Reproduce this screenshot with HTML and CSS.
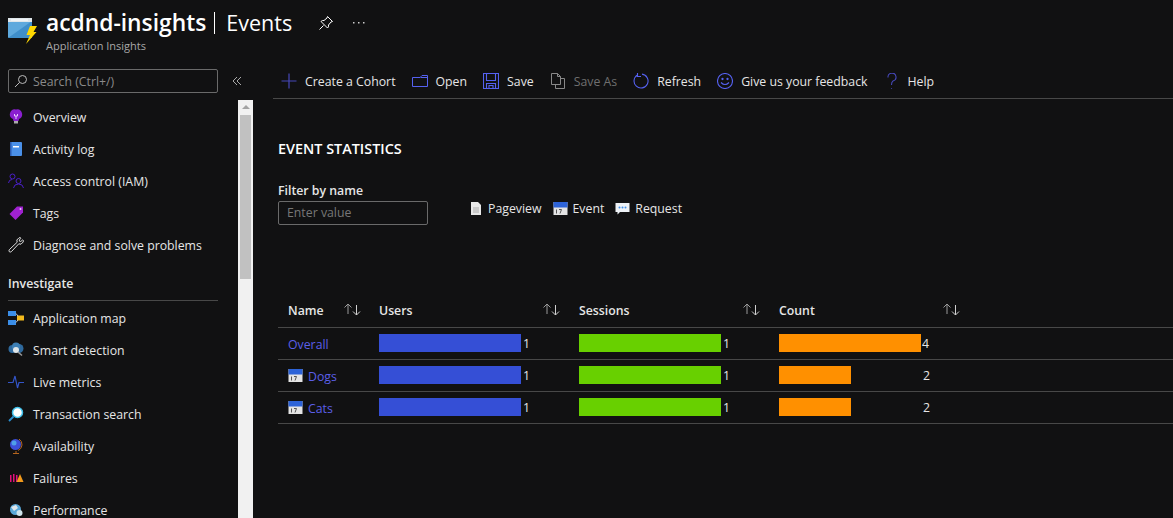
FILE: index.html
```html
<!DOCTYPE html>
<html lang="en">
<head>
  <meta charset="UTF-8" />
  <title>acdnd-insights | Events</title>
  <link rel="stylesheet" href="styles.css">
</head>
<body>
  <header class="page-header">
    <svg class="app-icon" width="30" height="30" viewBox="0 0 30 30">
      <rect x="0" y="1" width="24" height="20" rx="1" fill="#5ea9dd"/>
      <path d="M0 21 L24 4 V21Z" fill="#3f8fcb"/>
      <rect x="0" y="1" width="24" height="4" fill="#dfe6ea"/>
      <rect x="3" y="2.500" width="17" height="1" fill="#fff"/>
      <path d="M22 9 L29 9 L25.500 15 L28.500 15 L18 27 L22 18 L18.500 18Z" fill="#ffd800"/>
    </svg>
    <div class="title-block">
      <h1 class="page-title"><span class="res-name">acdnd-insights</span><span class="title-sep"></span>Events</h1>
      <div class="page-sub">Application Insights</div>
    </div>
    <svg class="pin" width="16" height="16" viewBox="0 0 16 16" fill="none" stroke="#fff" stroke-width="1">
      <path d="M9.500 1.500 L14.500 6.500 L13 7 L10.500 10 Q11 12 9.500 13 L3 6.500 Q4.500 5 6 5.500 L9 3Z M5.500 10.500 L1.500 14.500"/>
    </svg>
    <svg class="more" width="12" height="3" viewBox="0 0 12 3" fill="#ccc">
      <rect x="0" y="1" width="1.500" height="1.500"/><rect x="5" y="1" width="1.500" height="1.500"/><rect x="10" y="1" width="1.500" height="1.500"/>
    </svg>
  </header>

  <div class="page-body">
    <aside class="sidebar">
      <div class="search-row">
        <div class="search-box">
          <svg width="14" height="14" viewBox="0 0 14 14" fill="none" stroke="#bbb" stroke-width="1">
            <circle cx="8.500" cy="5.500" r="4"/><path d="M5.500 8.500 L1 13"/>
          </svg>
          <span>Search (Ctrl+/)</span>
        </div>
        <svg class="collapse" width="10" height="10" viewBox="0 0 10 10" fill="none" stroke="#aaa" stroke-width="1">
          <path d="M5 1 L1 5 L5 9 M9 1 L5 5 L9 9"/>
        </svg>
      </div>
      <div class="nav-wrap">
        <nav class="nav">
          <a class="nav-item">
            <svg width="16" height="16" viewBox="0 0 16 16"><path d="M8 0.500 A5 5 0 0 1 11 10 L10.500 12 H5.500 L5 10 A5 5 0 0 1 8 0.500Z" fill="#8a1fd0"/><rect x="6" y="12" width="4" height="2.500" fill="#aaa"/><path d="M6.500 5 V7 H9.500 V5 M8 7 V10" stroke="#e8c8ff" fill="none"/></svg>
            Overview
          </a>
          <a class="nav-item">
            <svg width="16" height="16" viewBox="0 0 16 16"><rect x="2" y="1" width="12" height="14" rx="1" fill="#4a90e8"/><rect x="2" y="1" width="1.500" height="14" fill="#2a5bb0"/><rect x="5" y="5" width="6" height="1.500" fill="#fff"/></svg>
            Activity log
          </a>
          <a class="nav-item">
            <svg width="16" height="16" viewBox="0 0 16 16" fill="none" stroke="#4a1fc8" stroke-width="1"><circle cx="4.500" cy="3.500" r="2.500"/><circle cx="10.500" cy="8" r="2.500"/><path d="M0.500 10 Q1 6.500 4 6.500 M5.500 15 Q6 11 10.500 11 Q15 11 15.500 15"/></svg>
            Access control (IAM)
          </a>
          <a class="nav-item">
            <svg width="16" height="16" viewBox="0 0 16 16"><path d="M9 1.500 L15 1.500 L15 7.500 L7.500 15 L1.500 9Z" fill="#a021d0"/><circle cx="12.500" cy="4" r="1" fill="#e8c8ff"/></svg>
            Tags
          </a>
          <a class="nav-item">
            <svg width="16" height="16" viewBox="0 0 16 16" fill="none" stroke="#ddd" stroke-width="1"><path d="M11 0.800 L8.800 3 L9.200 5.200 L1.300 12.700 Q0.600 14 1.300 14.700 Q2.200 15.400 3.300 14.700 L10.800 6.800 L13 7.200 L15.200 5 Q15.700 3 14.800 2.800 L12.800 4.500 L11.500 4.200 L11.300 3 L13 1.200 Q12.600 0.400 11 0.800Z"/></svg>
            Diagnose and solve problems
          </a>
          <div class="nav-heading">Investigate</div>
          <a class="nav-item">
            <svg width="16" height="16" viewBox="0 0 16 16"><rect x="0" y="1" width="8" height="5" fill="#3b8ee8"/><rect x="0" y="10" width="8" height="5" fill="#3b8ee8"/><rect x="9" y="5.500" width="7" height="5" fill="#f2b91c"/><path d="M8 3.500 L10 6 M8 12.500 L10 10" stroke="#ccc"/></svg>
            Application map
          </a>
          <a class="nav-item">
            <svg width="16" height="16" viewBox="0 0 16 16"><circle cx="4.500" cy="7" r="4" fill="#2f6a9e"/><circle cx="11" cy="6.500" r="4.500" fill="#2f6a9e"/><circle cx="8" cy="4.500" r="4" fill="#3d7fb5"/><circle cx="8" cy="8" r="3" fill="#dfe6ea"/><path d="M10 10 L14 13.500" stroke="#999" stroke-width="1.500"/></svg>
            Smart detection
          </a>
          <a class="nav-item">
            <svg width="16" height="16" viewBox="0 0 16 16" fill="none" stroke="#3355c8" stroke-width="1.200"><path d="M0 8.500 H5 L7 2 L9.500 14 L11 8.500 H16"/></svg>
            Live metrics
          </a>
          <a class="nav-item">
            <svg width="16" height="16" viewBox="0 0 16 16"><circle cx="9.500" cy="6.500" r="5" fill="#fff" stroke="#3fc0ea" stroke-width="1.500"/><path d="M5.500 10.500 L1 15" stroke="#2b8fd0" stroke-width="1.800"/></svg>
            Transaction search
          </a>
          <a class="nav-item">
            <svg width="16" height="16" viewBox="0 0 16 16"><circle cx="7.500" cy="6.500" r="5.500" fill="#3d4fd8"/><circle cx="6" cy="5" r="2.500" fill="#4fa0e8"/><path d="M11 1 A6.500 6.500 0 0 1 10 12.500 M8 13 V15 M5 15.500 H11" stroke="#b5651d" fill="none"/></svg>
            Availability
          </a>
          <a class="nav-item">
            <svg width="16" height="16" viewBox="0 0 16 16"><rect x="2" y="5" width="1.500" height="7" fill="#e0107a"/><rect x="5" y="4" width="1.500" height="8" fill="#e0107a"/><rect x="8" y="5" width="1.500" height="7" fill="#e0107a"/><path d="M8.500 12 L12 4 L15.500 12Z" fill="#f29a1c"/></svg>
            Failures
          </a>
          <a class="nav-item">
            <svg width="16" height="16" viewBox="0 0 16 16"><circle cx="7.500" cy="7.500" r="5.500" fill="#5aa8d8"/><path d="M3 5 L8 3 L10 6 L6 9Z" fill="#dfe6ea"/><circle cx="11.500" cy="11" r="3" fill="#cfe3ea"/></svg>
            Performance
          </a>
        </nav>
        <div class="scrollbar">
          <span class="scroll-arrow"></span>
          <div class="scroll-thumb"></div>
        </div>
      </div>
    </aside>

    <main class="main">
      <div class="toolbar">
        <button class="tool">
          <svg width="16" height="16" viewBox="0 0 16 16" stroke="#4648b8" stroke-width="1.200"><path d="M8 0.500 V15.500 M0.500 8 H15.500"/></svg>
          Create a Cohort
        </button>
        <button class="tool">
          <svg width="16" height="16" viewBox="0 0 16 16" fill="none" stroke="#5561f0"><path d="M0.500 4.500 H8 L10 2.500 H15.500 V13.500 H0.500Z M8.500 4.500 H15.500"/></svg>
          Open
        </button>
        <button class="tool">
          <svg width="16" height="16" viewBox="0 0 16 16" fill="none" stroke="#5561f0" stroke-width="1.100"><path d="M0.500 0.500 H15.500 V15.500 H0.500Z M3.500 0.500 V7.500 H12.500 V0.500 M3.500 15.500 V10.500 H12.500 V15.500 M6 15.500 V12.500 H10 V15.500"/></svg>
          Save
        </button>
        <button class="tool disabled">
          <svg width="16" height="16" viewBox="0 0 16 16" fill="none" stroke="#888"><path d="M1.500 0.500 H7.500 L10.500 3.500 V11.500 H1.500Z M7.500 0.500 V3.500 H10.500 M10.500 5.500 H14.500 V15.500 H5.500 V11.500"/></svg>
          Save As
        </button>
        <button class="tool">
          <svg width="16" height="16" viewBox="0 0 16 16" fill="none" stroke="#5561f0" stroke-width="1.100"><path d="M4.500 2 A7 7 0 1 0 9 1.100 M4.500 0 V3.500 H8"/></svg>
          Refresh
        </button>
        <button class="tool">
          <svg width="16" height="16" viewBox="0 0 16 16" fill="none" stroke="#5561f0" stroke-width="1.100"><circle cx="8" cy="8" r="7.500"/><circle cx="5.500" cy="6" r="0.600"/><circle cx="10.500" cy="6" r="0.600"/><path d="M4 9.500 Q8 13.500 12 9.500"/></svg>
          Give us your feedback
        </button>
        <button class="tool">
          <svg width="16" height="16" viewBox="0 0 16 16" fill="none" stroke="#4648b8" stroke-width="1.100"><path d="M4 4.500 A4 4 0 1 1 9 8 Q7.500 9 7.500 12 M7.500 15 V15.800"/></svg>
          Help
        </button>
      </div>

      <section class="content">
        <h2 class="section-title">EVENT STATISTICS</h2>
        <div class="filter-row">
          <div class="filter">
            <label class="filter-label">Filter by name</label>
            <div class="filter-input">Enter value</div>
          </div>
          <ul class="legend">
            <li>
              <svg width="14" height="15" viewBox="0 0 14 15"><path d="M2 1 H9 L12 4 V14 H2Z" fill="#e8e8e8"/><path d="M4 7 H10 M4 9 H10 M4 11 H10" stroke="#aaa"/></svg>
              Pageview
            </li>
            <li>
              <svg width="15" height="15" viewBox="0 0 15 15"><use href="#cal"/></svg>
              Event
            </li>
            <li>
              <svg width="15" height="15" viewBox="0 0 15 15"><path d="M0.500 2 H14.500 V11 H5 L2.500 13.500 V11 H0.500Z" fill="#eef2f6"/><circle cx="4.500" cy="6.500" r="1" fill="#3f8fe8"/><circle cx="7.500" cy="6.500" r="1" fill="#3f8fe8"/><circle cx="10.500" cy="6.500" r="1" fill="#3f8fe8"/></svg>
              Request
            </li>
          </ul>
        </div>

        <svg width="0" height="0" class="defs">
          <symbol id="cal" viewBox="0 0 15 15">
            <rect x="0.500" y="1" width="14" height="13" fill="#e4e4e4"/>
            <rect x="0.500" y="1" width="14" height="5.500" fill="#2d63d8"/>
            <path d="M3.500 8.500 V12.500 M6 8.500 H8.500 L7 12.500" stroke="#555" fill="none"/>
          </symbol>
          <symbol id="sort" viewBox="0 0 17 13">
            <path d="M4 11 V1 M0.500 4.500 L4 1 L7.500 4.500" stroke="#9a9a9a" fill="none"/>
            <path d="M12.500 2 V12 M9 8.500 L12.500 12 L16 8.500" stroke="#d0d0d0" fill="none"/>
          </symbol>
        </svg>

        <div class="stats">
          <div class="stats-row stats-head">
            <div class="cell">Name<svg class="sort" width="17" height="13"><use href="#sort"/></svg></div>
            <div class="cell">Users<svg class="sort" width="17" height="13"><use href="#sort"/></svg></div>
            <div class="cell">Sessions<svg class="sort" width="17" height="13"><use href="#sort"/></svg></div>
            <div class="cell">Count<svg class="sort" width="17" height="13"><use href="#sort"/></svg></div>
          </div>
          <div class="stats-row">
            <div class="cell name"><a>Overall</a></div>
            <div class="cell"><span class="bar blue"></span><span class="val">1</span></div>
            <div class="cell"><span class="bar green"></span><span class="val">1</span></div>
            <div class="cell"><span class="bar orange"></span><span class="val four">4</span></div>
          </div>
          <div class="stats-row">
            <div class="cell name"><svg width="15" height="15" viewBox="0 0 15 15"><use href="#cal"/></svg><a>Dogs</a></div>
            <div class="cell"><span class="bar blue"></span><span class="val">1</span></div>
            <div class="cell"><span class="bar green"></span><span class="val">1</span></div>
            <div class="cell"><span class="bar orange half"></span><span class="val two">2</span></div>
          </div>
          <div class="stats-row">
            <div class="cell name"><svg width="15" height="15" viewBox="0 0 15 15"><use href="#cal"/></svg><a>Cats</a></div>
            <div class="cell"><span class="bar blue"></span><span class="val">1</span></div>
            <div class="cell"><span class="bar green"></span><span class="val">1</span></div>
            <div class="cell"><span class="bar orange half"></span><span class="val two">2</span></div>
          </div>
        </div>
      </section>
    </main>
  </div>
</body>
</html>
```

FILE: styles.css
```css
:root {
  --bg: #111112;
  --line: #484848;
  --link: #5b5fe8;
}

html, body {
  margin: 0;
  padding: 0;
  height: 100%;
  overflow: hidden;
  background: var(--bg);
  color: #e6e6e6;
  font-family: "Open Sans", "Noto Sans", sans-serif;
  font-size: 12.3px;
}

/* header */
.page-header {
  display: flex;
  align-items: flex-start;
  height: 64px;
  box-sizing: border-box;
  padding: 9px 0 0 8px;
}

.app-icon {
  margin: 8px 8px 0 0;
}

.page-title {
  display: flex;
  align-items: center;
  margin: 0;
  font-size: 21.5px;
  font-weight: 400;
  line-height: 28px;
  color: #fff;
}

.res-name {
  font-size: 22.8px;
  font-weight: 600;
}

.title-sep {
  width: 1px;
  height: 22px;
  margin: 0 11px 0 8px;
  background: #fff;
}

.page-sub {
  font-size: 11px;
  line-height: 16px;
  margin-top: 1px;
  color: #a8a8a8;
}

.pin {
  margin: 6px 0 0 26px;
}

.more {
  margin: 12px 0 0 19px;
}

/* sidebar */
.page-body {
  display: flex;
  height: 454px;
}

.sidebar {
  width: 253px;
  flex: none;
  display: flex;
  flex-direction: column;
}

.search-row {
  display: flex;
  align-items: center;
  height: 36px;
  padding: 0 0 2px 8px;
  box-sizing: border-box;
}

.search-box {
  width: 210px;
  height: 24px;
  box-sizing: border-box;
  border: 1px solid #6a6a6a;
  border-radius: 2px;
  display: flex;
  align-items: center;
  gap: 5px;
  padding-left: 5px;
  color: #8a8a8a;
}

.collapse {
  margin-left: 14px;
}

.nav-wrap {
  display: flex;
  flex: 1;
  min-height: 0;
}

.nav {
  width: 238px;
  flex: none;
  padding-top: 1px;
}

.nav-item {
  display: flex;
  align-items: center;
  gap: 9px;
  height: 32px;
  padding-left: 8px;
  color: #e6e6e6;
}

.nav-heading {
  margin: 14px 20px 1px 8px;
  height: 25px;
  line-height: 18px;
  font-weight: 600;
  border-bottom: 1px solid var(--line);
  width: 210px;
}

.scrollbar {
  width: 15px;
  flex: none;
  background: #f1f1f1;
  display: flex;
  flex-direction: column;
  align-items: center;
}

.scroll-arrow {
  margin-top: 5px;
  border-left: 4px solid transparent;
  border-right: 4px solid transparent;
  border-bottom: 4px solid #a3a3a3;
}

.scroll-thumb {
  width: 11px;
  height: 164px;
  margin-top: 6px;
  background: #c1c1c1;
}

/* toolbar */
.main {
  flex: 1;
  min-width: 0;
  padding-left: 20px;
}

.toolbar {
  display: flex;
  align-items: center;
  height: 35px;
  box-sizing: border-box;
  padding-left: 8px;
  border-bottom: 1px solid var(--line);
}

.tool {
  display: flex;
  align-items: center;
  gap: 8px;
  margin-right: 16px;
  padding: 0;
  border: 0;
  background: none;
  color: #e6e6e6;
  font: inherit;
}

.tool.disabled {
  color: #6f6f6f;
}

/* statistics */
.content {
  padding: 41px 0 0 5px;
}

.section-title {
  margin: 0;
  font-size: 14.4px;
  font-weight: 600;
  line-height: 18px;
  color: #fff;
}

.filter-row {
  display: flex;
  margin-top: 24px;
}

.filter-label {
  display: block;
  font-weight: 600;
  line-height: 18px;
}

.filter-input {
  width: 150px;
  height: 24px;
  box-sizing: border-box;
  margin-top: 1px;
  padding-left: 8px;
  line-height: 22px;
  border: 1px solid #6a6a6a;
  border-radius: 2px;
  color: #777;
}

.legend {
  display: flex;
  gap: 11px;
  list-style: none;
  margin: 0 0 0 41px;
  padding: 17px 0 0;
}

.legend li {
  display: flex;
  align-items: center;
  gap: 5px;
  height: 18px;
}

.defs {
  position: absolute;
}

.stats {
  margin-top: 67px;
}

.stats-row {
  display: grid;
  grid-template-columns: 101px 200px 200px 1fr;
  height: 32px;
  box-sizing: border-box;
  border-bottom: 1px solid var(--line);
  align-items: center;
}

.stats-head {
  height: 36px;
  padding-top: 2px;
  font-weight: 600;
}

.cell {
  display: flex;
  align-items: center;
  position: relative;
  height: 100%;
}

.cell:first-child {
  padding-left: 10px;
}

.cell .sort {
  position: absolute;
  left: 164px;
  top: 9px;
}

.cell:first-child .sort {
  left: 66px;
}

.name {
  gap: 5px;
}

.name a {
  padding-top: 2px;
  color: var(--link);
}

.bar {
  display: block;
  width: 142px;
  height: 18px;
  margin-bottom: 2px;
}

.bar.half {
  width: 72px;
}

.blue { background: #354fd6; }
.green { background: #68d000; }
.orange { background: #ff9000; }

.val {
  margin-left: 2px;
  margin-bottom: 1px;
}

.val.four {
  margin-left: 1px;
}

.val.two {
  margin-left: 72px;
}
```
